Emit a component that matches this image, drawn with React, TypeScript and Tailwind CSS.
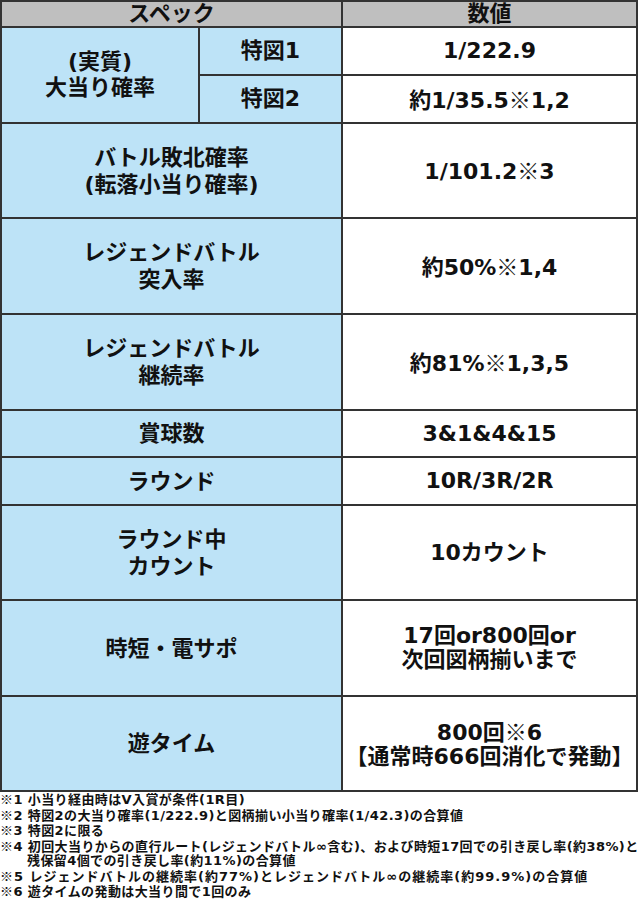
const font = { fontFamily: '"DejaVu Sans", "Noto Sans CJK JP", sans-serif' };
const cjk = { fontFamily: '"Noto Sans CJK JP", sans-serif' };

const rows: { label: string[]; value: string[]; h: string }[] = [
  { label: ["バトル敗北確率", "(転落小当り確率)"], value: ["1/101.2※3"], h: "93px" },
  { label: ["レジェンドバトル", "突入率"], value: ["約50%※1,4"], h: "94px" },
  { label: ["レジェンドバトル", "継続率"], value: ["約81%※1,3,5"], h: "94px" },
  { label: ["賞球数"], value: ["3&1&4&15"], h: "45px" },
  { label: ["ラウンド"], value: ["10R/3R/2R"], h: "46px" },
  { label: ["ラウンド中", "カウント"], value: ["10カウント"], h: "93px" },
  { label: ["時短・電サポ"], value: ["17回or800回or", "次回図柄揃いまで"], h: "94px" },
  { label: ["遊タイム"], value: ["800回※6", "【通常時666回消化で発動】"], h: "93px" },
];

const notes = [
  { t: "※1 小当り経由時はV入賞が条件(1R目)", c: "" },
  { t: "※2 特図2の大当り確率(1/222.9)と図柄揃い小当り確率(1/42.3)の合算値", c: "" },
  { t: "※3 特図2に限る", c: "" },
  { t: "※4 初回大当りからの直行ルート(レジェンドバトル∞含む)、および時短17回での引き戻し率(約38%)と", c: "" },
  { t: "残保留4個での引き戻し率(約11%)の合算値", c: "pl-[27px]" },
  { t: "※5 レジェンドバトルの継続率(約77%)とレジェンドバトル∞の継続率(約99.9%)の合算値", c: "tracking-[1px]" },
  { t: "※6 遊タイムの発動は大当り間で1回のみ", c: "" },
];

// ※ is drawn from the CJK face, like the reference
function Txt({ s }: { s: string }) {
  const parts = s.split("※");
  return (
    <>
      {parts.map((p, i) => (
        <span key={i}>
          {i > 0 && (
            <span className="inline-block" style={cjk}>
              ※
            </span>
          )}
          {p}
        </span>
      ))}
    </>
  );
}

function Cell({
  lines,
  className,
  leading,
}: {
  lines: string[];
  className: string;
  leading: string;
}) {
  return (
    <div className={`flex flex-col items-center justify-center text-center text-[22px] font-bold text-[#111] ${leading} ${className}`}>
      {lines.map((l) => (
        <span key={l} className="whitespace-nowrap">
          <Txt s={l} />
        </span>
      ))}
    </div>
  );
}

export default function App() {
  return (
    <div className="w-[640px] min-h-[899px] bg-white" style={font}>
      {/* spec table */}
      <div
        className="grid w-[638px] grid-cols-[196px_141px_293px] gap-[2px] bg-[#333] p-[2px]"
        style={{
          gridTemplateRows: ["24px", "46px", "46px", ...rows.map((r) => r.h)].join(" "),
        }}
      >
        <div className="col-span-2 flex items-center justify-center bg-[#bfbfbf] text-[22px] font-bold leading-none text-[#111]">
          スペック
        </div>
        <div className="flex items-center justify-center bg-[#bfbfbf] text-[22px] font-bold leading-none text-[#111]">
          数値
        </div>

        <Cell lines={["(実質)", "大当り確率"]} className="row-span-2 bg-[#bde3f7]" leading="leading-[26px]" />
        <Cell lines={["特図1"]} className="bg-[#bde3f7]" leading="leading-none" />
        <Cell lines={["1/222.9"]} className="bg-white" leading="leading-none" />
        <Cell lines={["特図2"]} className="bg-[#bde3f7]" leading="leading-none" />
        <Cell lines={["約1/35.5※1,2"]} className="bg-white" leading="leading-none" />

        {rows.map((r) => (
          <div key={r.label.join()} className="contents">
            <Cell lines={r.label} className="col-span-2 bg-[#bde3f7]" leading="leading-[27px]" />
            <Cell lines={r.value} className="bg-white" leading="leading-[24px]" />
          </div>
        ))}
      </div>

      {/* notes */}
      <div className="text-[13px] font-bold leading-[14.5px] tracking-[0.4px] text-[#111]">
        {notes.map((n) => (
          <div key={n.t} className={`whitespace-nowrap ${n.c}`}>
            <Txt s={n.t} />
          </div>
        ))}
      </div>
    </div>
  );
}
